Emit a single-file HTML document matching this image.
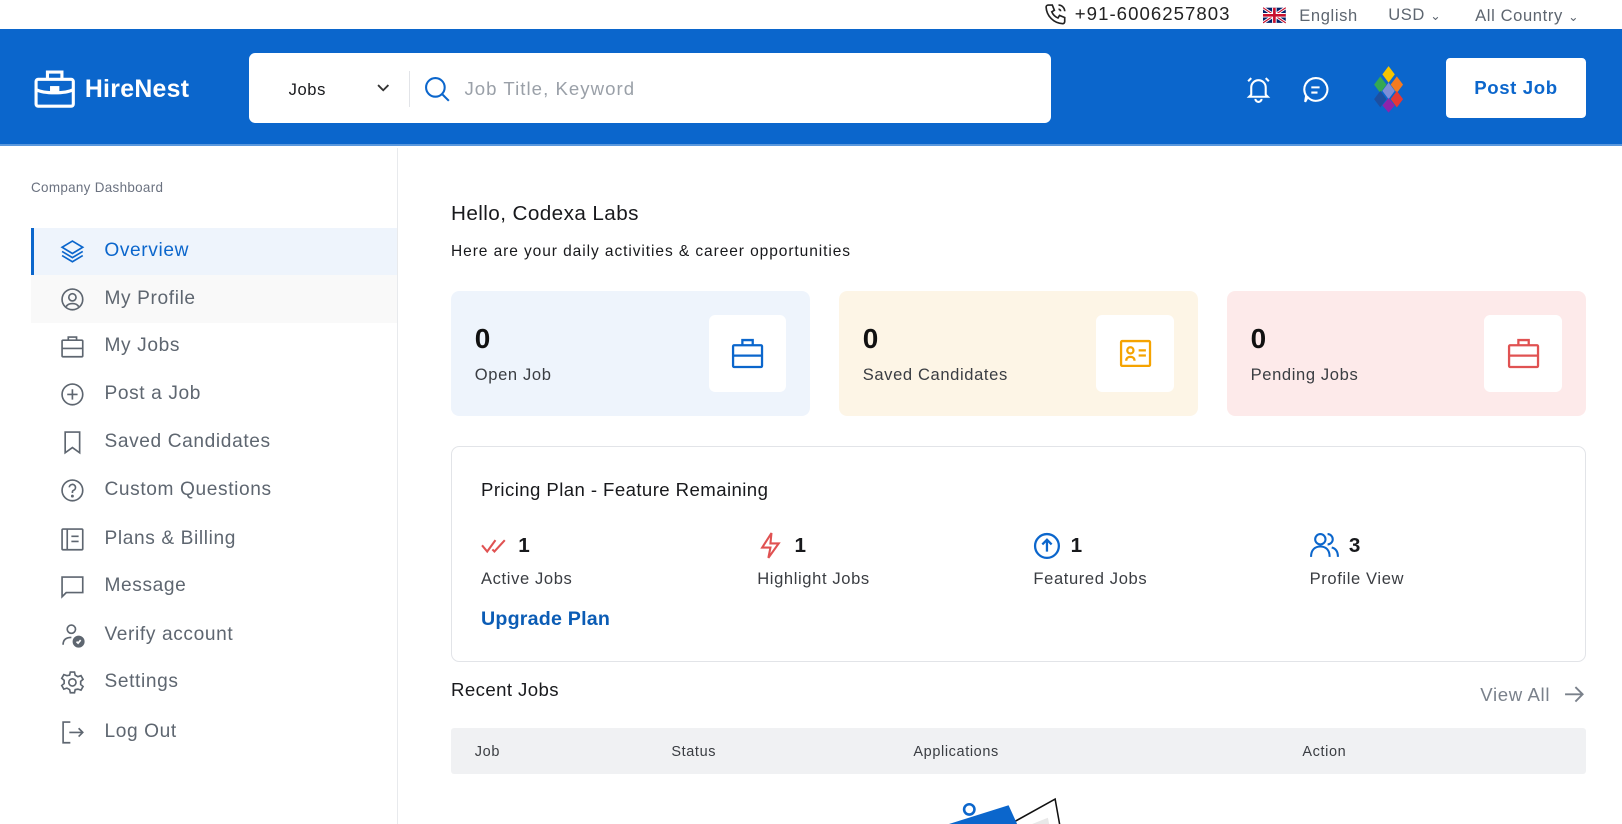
<!DOCTYPE html>
<html><head><meta charset="utf-8">
<style>
*{box-sizing:border-box;margin:0;padding:0}
html,body{width:1622px;height:824px;overflow:hidden;background:#fff}
#w{zoom:1.03444;width:1568px;height:797px;position:relative;font-family:"Liberation Sans",sans-serif;color:#18191c;letter-spacing:0.6px}
.a{position:absolute;white-space:nowrap}
.hdr{position:absolute;left:0;top:28px;width:1568px;height:113px;background:#0b66cc;border-bottom:2px solid #5b98dd}
.side{position:absolute;left:0;top:143px;width:385px;height:654px;border-right:1px solid #e8eaed}
.mi{position:absolute;left:30px;width:354px;height:46px;display:flex;align-items:center;font-size:18.5px;color:#5e6670}
.mi svg{position:absolute;left:28px;width:24px;height:24px}
.mi span{position:absolute;left:71px;top:12px}
.card{position:absolute;top:281px;width:347px;height:121px;border-radius:8px}
.card .n{position:absolute;left:23px;top:31px;font-size:27px;font-weight:600;color:#111}
.card .l{position:absolute;left:23px;top:72px;font-size:16px;color:#3a3d42}
.card .ib{position:absolute;left:249px;top:24px;width:75px;height:74px;background:#fff;border-radius:6px;display:flex;align-items:center;justify-content:center}
.st{position:absolute;top:512px}
.st .num{position:absolute;left:36px;top:4px;font-size:20px;font-weight:600}
.st .lab{position:absolute;left:0;top:38px;font-size:16px;color:#3a3d42;white-space:nowrap}
.th{position:absolute;top:719px;font-size:14px;color:#3a3d42}
</style></head><body><div id="w">
<svg class="a" style="left:1008px;top:2px" width="24" height="24" viewBox="0 0 24 24" fill="none" stroke="#222" stroke-width="1.6"><path d="M5 3h4l2 5-2.5 1.5a11 11 0 0 0 6 6L16 13l5 2v4a2 2 0 0 1-2 2A17 17 0 0 1 3 5a2 2 0 0 1 2-2"/><path d="M15 3a6 6 0 0 1 6 6M15 7a2 2 0 0 1 2 2"/></svg>
<div class="a" style="left:1039px;top:3px;font-size:18px;color:#222;letter-spacing:1px">+91-6006257803</div>
<svg class="a" style="left:1221px;top:7px" width="22" height="16" viewBox="0 0 60 40"><rect width="60" height="40" fill="#012169"/><path d="M0 0L60 40M60 0L0 40" stroke="#fff" stroke-width="8"/><path d="M0 0L60 40M60 0L0 40" stroke="#C8102E" stroke-width="3"/><path d="M30 0v40M0 20h60" stroke="#fff" stroke-width="12"/><path d="M30 0v40M0 20h60" stroke="#C8102E" stroke-width="7"/></svg>
<div class="a" style="left:1256px;top:6px;font-size:16px;color:#5e6670">English</div>
<div class="a" style="left:1342px;top:5px;font-size:16px;color:#5e6670">USD <span style="font-size:12px">&#8964;</span></div>
<div class="a" style="left:1426px;top:6px;font-size:16px;color:#5e6670">All Country <span style="font-size:12px">&#8964;</span></div>
<div class="hdr"></div>
<svg class="a" style="left:33px;top:67px" width="40" height="38" viewBox="0 0 40 38" fill="none" stroke="#fff" stroke-width="3"><rect x="2" y="10" width="36" height="26" rx="2"/><path d="M13 10V3h14v7M2 20c8 4 28 4 36 0"/><rect x="17" y="18" width="6" height="4" fill="#fff"/></svg>
<div class="a" style="left:82px;top:73px;font-size:24px;font-weight:700;color:#fff;letter-spacing:0.3px">HireNest</div>
<div class="a" style="left:241px;top:51px;width:775px;height:68px;background:#fff;border-radius:6px"></div>
<div class="a" style="left:279px;top:77px;font-size:16px;color:#18191c">Jobs</div>
<svg class="a" style="left:363px;top:80px" width="14" height="10" viewBox="0 0 14 10" fill="none" stroke="#333" stroke-width="1.8"><path d="M2 2l5 5 5-5"/></svg>
<div class="a" style="left:395px;top:69px;width:1px;height:34px;background:#e2e4e8"></div>
<svg class="a" style="left:410px;top:73px" width="26" height="26" viewBox="0 0 26 26" fill="none" stroke="#0b66cc" stroke-width="2"><circle cx="11" cy="11" r="9"/><path d="M18 18l6 6"/></svg>
<div class="a" style="left:449px;top:75px;font-size:18px;color:#9aa0a8;letter-spacing:1px">Job Title, Keyword</div>
<svg class="a" style="left:1203px;top:72px" width="28" height="28" viewBox="0 0 28 28" fill="none" stroke="#fff" stroke-width="2"><path d="M7 20V13a7 7 0 0 1 14 0v7l2 2H5z"/><path d="M11 24a3 3 0 0 0 6 0M4 7l3-3M24 7l-3-3"/></svg>
<svg class="a" style="left:1259px;top:73px" width="27" height="27" viewBox="0 0 27 27" fill="none" stroke="#fff" stroke-width="2"><path d="M13.5 2a11 11 0 1 1-8 18.5L3 25l1-6A11 11 0 0 1 13.5 2z"/><path d="M9 11h8M9 16h6"/></svg>
<svg class="a" style="left:1325px;top:62px" width="34" height="48" viewBox="0 0 34 48"><path d="M17 2l6 8-6 8-6-8z" fill="#f5c400"/><path d="M9 12l6 8-6 8-6-8z" fill="#34a853"/><path d="M25 12l6 8-6 8-6-8z" fill="#f47b20"/><path d="M17 18l6 8-6 8-6-8z" fill="#7d8ed8"/><path d="M9 26l6 8-6 8-6-8z" fill="#1d4fa0"/><path d="M25 26l6 8-6 8-6-8z" fill="#e53935"/><path d="M17 33l6 7-6 7-6-7z" fill="#8e24aa"/></svg>
<div class="a" style="left:1398px;top:56px;width:135px;height:58px;background:#fff;border-radius:4px;color:#0b66cc;font-size:18px;font-weight:700;text-align:center;line-height:58px">Post Job</div>
<div class="side"></div>
<div class="a" style="left:30px;top:174px;font-size:13px;color:#6b7280;letter-spacing:0.3px">Company Dashboard</div>
<div class="mi" style="top:220px;background:#eef4fc;border-left:3px solid #0b66cc;color:#0b66cc"><svg style="left:25px" viewBox="0 0 24 24" fill="none" stroke="#0b66cc" stroke-width="1.6"><path d="M12 2l10 6-10 6L2 8z"/><path d="M2 12l10 6 10-6M2 16l10 6 10-6"/></svg><span style="left:68px">Overview</span></div>
<div class="mi" style="top:266px;background:#f9f9f9"><svg viewBox="0 0 24 24" fill="none" stroke="#5e6670" stroke-width="1.6"><circle cx="12" cy="12" r="10"/><circle cx="12" cy="10" r="3.5"/><path d="M6 19c2-4 10-4 12 0"/></svg><span>My Profile</span></div>
<div class="mi" style="top:312px"><svg viewBox="0 0 24 24" fill="none" stroke="#5e6670" stroke-width="1.6"><rect x="2" y="6" width="20" height="16" rx="1"/><path d="M8 6V3h8v3M2 14h20"/></svg><span>My Jobs</span></div>
<div class="mi" style="top:358px"><svg viewBox="0 0 24 24" fill="none" stroke="#5e6670" stroke-width="1.6"><circle cx="12" cy="12" r="10"/><path d="M12 7v10M7 12h10"/></svg><span>Post a Job</span></div>
<div class="mi" style="top:405px"><svg viewBox="0 0 24 24" fill="none" stroke="#5e6670" stroke-width="1.6"><path d="M5 2h14v20l-7-5-7 5z"/></svg><span>Saved Candidates</span></div>
<div class="mi" style="top:451px"><svg viewBox="0 0 24 24" fill="none" stroke="#5e6670" stroke-width="1.6"><circle cx="12" cy="12" r="10"/><path d="M9 9a3 3 0 1 1 4 3c-1 .5-1 1-1 2.5"/><circle cx="12" cy="17.5" r=".6" fill="#5e6670"/></svg><span>Custom Questions</span></div>
<div class="mi" style="top:498px"><svg viewBox="0 0 24 24" fill="none" stroke="#5e6670" stroke-width="1.6"><rect x="2" y="2" width="20" height="20" rx="1"/><path d="M7 2v20M11 9h7M11 14h7"/></svg><span>Plans &amp; Billing</span></div>
<div class="mi" style="top:544px"><svg viewBox="0 0 24 24" fill="none" stroke="#5e6670" stroke-width="1.6"><path d="M2 3h20v15H6l-4 4z"/></svg><span>Message</span></div>
<div class="mi" style="top:591px"><svg viewBox="0 0 24 24" fill="none" stroke="#5e6670" stroke-width="1.6"><circle cx="11" cy="6" r="4"/><path d="M3 21c0-5 3-7 8-7"/><circle cx="18" cy="18" r="5" fill="#5e6670"/><path d="M16 18l1.5 1.5L20 16.5" stroke="#fff"/></svg><span>Verify account</span></div>
<div class="mi" style="top:637px"><svg viewBox="0 0 24 24" fill="none" stroke="#5e6670" stroke-width="1.6"><circle cx="12" cy="12" r="3.5"/><path d="M10 2h4l.7 3 2.6 1.5 3-1 2 3.5-2.3 2v3l2.3 2-2 3.5-3-1L14.7 19 14 22h-4l-.7-3-2.6-1.5-3 1-2-3.5 2.3-2v-3L1.7 8l2-3.5 3 1L9.3 5z"/></svg><span>Settings</span></div>
<div class="mi" style="top:685px"><svg viewBox="0 0 24 24" fill="none" stroke="#5e6670" stroke-width="1.6"><path d="M10 2H3v20h7M9 12h13M18 8l4 4-4 4"/></svg><span>Log Out</span></div>
<div class="a" style="left:436px;top:195px;font-size:20px;font-weight:500;color:#18191c;letter-spacing:0.4px">Hello, Codexa Labs</div>
<div class="a" style="left:436px;top:235px;font-size:15px;color:#18191c;letter-spacing:0.9px">Here are your daily activities &amp; career opportunities</div>
<div class="card" style="left:436px;background:#eef4fc"><div class="n">0</div><div class="l">Open Job</div><div class="ib"><svg width="32" height="30" viewBox="0 0 32 30" fill="none" stroke="#0b66cc" stroke-width="2.2"><rect x="2" y="7" width="28" height="21" rx="1"/><path d="M11 7V2h10v5M2 17h28"/></svg></div></div>
<div class="card" style="left:811px;background:#fdf5e6"><div class="n">0</div><div class="l">Saved Candidates</div><div class="ib"><svg width="32" height="28" viewBox="0 0 32 28" fill="none" stroke="#f5a300" stroke-width="2.2"><rect x="2" y="2" width="28" height="24" rx="1"/><circle cx="11" cy="11" r="3"/><path d="M7 21c0-5 8-5 8 0M19 11h7M19 16h7"/></svg></div></div>
<div class="card" style="left:1186px;background:#fdeaea"><div class="n">0</div><div class="l">Pending Jobs</div><div class="ib"><svg width="32" height="30" viewBox="0 0 32 30" fill="none" stroke="#e05252" stroke-width="2.2"><rect x="2" y="7" width="28" height="21" rx="1"/><path d="M11 7V2h10v5M2 17h28"/></svg></div></div>
<div class="a" style="left:436px;top:431px;width:1097px;height:209px;border:1px solid #e2e4e8;border-radius:8px"></div>
<div class="a" style="left:465px;top:463px;font-size:18px;font-weight:500;letter-spacing:0.4px">Pricing Plan - Feature Remaining</div>
<div class="st" style="left:465px"><svg class="a" style="top:6px" width="28" height="18" viewBox="0 0 28 18" fill="none" stroke="#e05252" stroke-width="2"><path d="M1 9l5 6L14 4M11 13l2 2 10-11"/></svg><div class="num">1</div><div class="lab">Active Jobs</div></div>
<div class="st" style="left:732px"><svg class="a" style="top:1px" width="26" height="28" viewBox="0 0 26 28" fill="none" stroke="#e05252" stroke-width="2"><path d="M14 2L5 16h8l-2 10 10-14h-8z"/></svg><div class="num">1</div><div class="lab">Highlight Jobs</div></div>
<div class="st" style="left:999px"><svg class="a" style="top:2px" width="27" height="27" viewBox="0 0 27 27" fill="none" stroke="#0b66cc" stroke-width="2.2"><circle cx="13.5" cy="13.5" r="11.5"/><path d="M13.5 19V8M9 12l4.5-4.5L18 12"/></svg><div class="num">1</div><div class="lab">Featured Jobs</div></div>
<div class="st" style="left:1266px"><svg class="a" style="top:2px" width="28" height="26" viewBox="0 0 28 26" fill="none" stroke="#0b66cc" stroke-width="2"><circle cx="10" cy="7" r="5"/><path d="M1 24c0-7 4-10 9-10s9 3 9 10M17 2a5 5 0 0 1 0 10M21 15c4 1 6 4 6 9"/></svg><div class="num" style="left:38px">3</div><div class="lab">Profile View</div></div>
<div class="a" style="left:465px;top:588px;font-size:19px;font-weight:700;color:#0b5cb5;letter-spacing:0.2px">Upgrade Plan</div>
<div class="a" style="left:436px;top:656px;font-size:18px;font-weight:500;letter-spacing:0.4px">Recent Jobs</div>
<div class="a" style="left:1431px;top:661px;font-size:18px;color:#7a818b">View All</div>
<svg class="a" style="left:1511px;top:662px" width="22" height="18" viewBox="0 0 22 18" fill="none" stroke="#7a818b" stroke-width="1.8"><path d="M2 9h17M12 2l7 7-7 7"/></svg>
<div class="a" style="left:436px;top:704px;width:1097px;height:44px;background:#f0f1f3;border-radius:3px"></div>
<div class="th" style="left:459px">Job</div>
<div class="th" style="left:649px">Status</div>
<div class="th" style="left:883px">Applications</div>
<div class="th" style="left:1259px">Action</div>
<svg class="a" style="left:900px;top:770px" width="130" height="30" viewBox="0 0 130 30"><path d="M75 27l45-25 5 28z" fill="#fff" stroke="#111" stroke-width="1.5"/><path d="M5 30l70-22 10 22z" fill="#0b66cc"/><path d="M88 30l25-10 2 10z" fill="#e8e8e8"/><circle cx="37" cy="12" r="5" fill="#fff" stroke="#0b66cc" stroke-width="2.5"/></svg>
</div></body></html>
